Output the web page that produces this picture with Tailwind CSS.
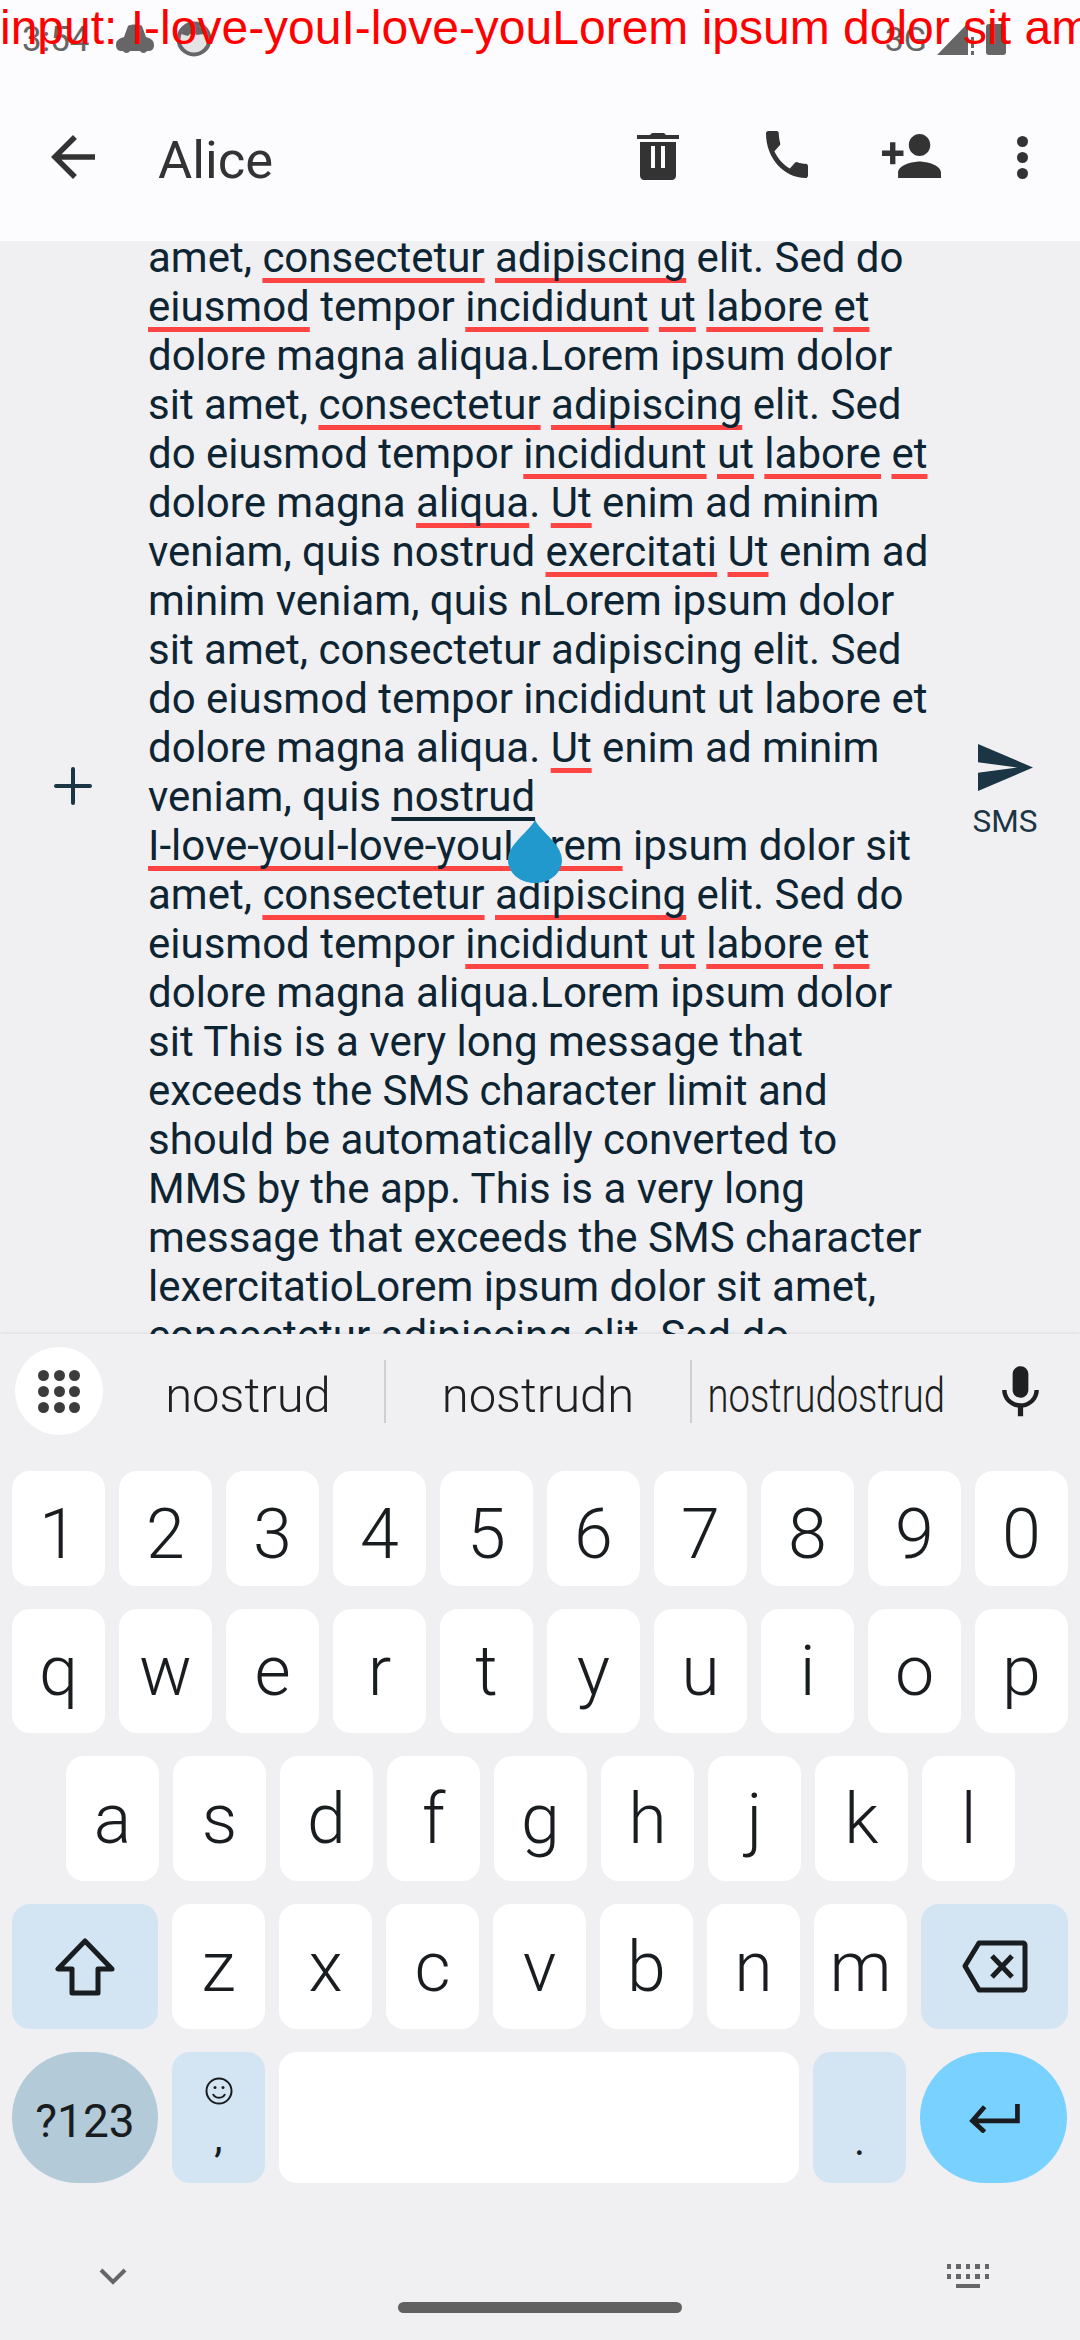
<!DOCTYPE html>
<html lang="en">
<head>
  <meta charset="UTF-8" />
  <title>Messaging</title>
  <script src="https://cdn.jsdelivr.net/npm/@tailwindcss/browser@4"></script>
</head>
<body class="bg-[#f0f0f3] [font-family:Roboto,sans-serif]">
  <div class="relative flex h-[2340px] w-[1080px] flex-col overflow-hidden">

    <!-- debug line drawn over the status bar -->
    <div class="absolute left-0 top-0 z-20 whitespace-nowrap text-[48px] leading-[55px] text-[#ff0000] [font-family:'Liberation_Sans',sans-serif]">input: I-love-youI-love-youLorem ipsum dolor sit am</div>

    <!-- status bar + toolbar -->
    <header class="h-[241px] shrink-0 bg-[#fcfcff]">
      <div class="flex h-[70px] items-center px-[22px] text-[#666666]">
        <span class="text-[35px] leading-none pt-[8px]">3:54</span>
        <svg class="ml-[26px] mt-[8px]" width="38" height="30" viewBox="0 0 38 30" fill="#666666"><path d="M12 2c2-2 12-2 14 0l4 11c4 1 8 3 8 8 0 5-3 6-6 6h-1a4 4 0 0 1-7 0H14a4 4 0 0 1-7 0H6c-3 0-6-1-6-6 0-5 4-7 8-8z"/></svg>
        <svg class="ml-[22px] mt-[8px]" width="36" height="36" viewBox="0 0 36 36"><circle cx="18" cy="18" r="15.5" fill="#e4e4e6" stroke="#666666" stroke-width="4"/><path d="M18 4a14 14 0 0 0-13 9l7 2c3-4 6-3 9-1 4-1 7-1 9 0A14 14 0 0 0 18 4z" fill="#666666"/></svg>
        <span class="ml-auto pt-[8px] text-[34px] leading-none">3G</span>
        <svg class="ml-[10px] mt-[8px]" width="40" height="32" viewBox="0 0 40 32" fill="#666666"><path d="M0 32 31 0v32z"/><path d="M34 14h3v11h-3zM34 28h3v4h-3z"/></svg>
        <span class="ml-[9px] mr-[52px] mt-[8px] h-[31px] w-[20px] rounded-[3px] bg-[#666666]"></span>
      </div>
      <div class="flex h-[171px] items-start">
        <svg class="ml-[51px] mt-[65px]" width="44" height="44" viewBox="4 4 16 16" fill="#333333"><path d="M20 11H7.83l5.59-5.59L12 4l-8 8 8 8 1.41-1.41L7.83 13H20v-2z"/></svg>
        <span class="ml-[63px] mt-[59px] w-[116px] text-[52.5px] leading-[62px] text-[#333333]">Alice</span>
        <svg class="ml-[363px] mt-[63px]" width="42" height="47" viewBox="0 0 42 47" fill="#333333"><path fill-rule="evenodd" d="M3 9h36v34c0 2-2 4-4 4H7c-2 0-4-2-4-4zM14 13v22h4V13zM24 13v22h4V13zM0 2h13l2-2h12l2 2h13v4H0z"/></svg>
        <svg class="ml-[87px] mt-[61px]" width="42" height="47" viewBox="3 3 18 18" preserveAspectRatio="none" fill="#333333"><path d="M6.62 10.79c1.44 2.83 3.76 5.14 6.59 6.59l2.2-2.2c.27-.27.67-.36 1.02-.24 1.12.37 2.33.57 3.57.57.55 0 1 .45 1 1V20c0 .55-.45 1-1 1-9.39 0-17-7.61-17-17 0-.55.45-1 1-1h3.5c.55 0 1 .45 1 1 0 1.25.2 2.45.57 3.57.11.35.03.74-.25 1.02l-2.2 2.2z"/></svg>
        <svg class="ml-[74px] mt-[64px]" width="59" height="44" viewBox="1 4 22 16" preserveAspectRatio="none" fill="#333333"><path d="M15 12c2.21 0 4-1.79 4-4s-1.79-4-4-4-4 1.79-4 4 1.79 4 4 4zm-9-2V7H4v3H1v2h3v3h2v-3h3v-2H6zm9 4c-2.67 0-8 1.34-8 4v2h16v-2c0-2.66-5.33-4-8-4z"/></svg>
        <div class="ml-[76px] mt-[66px] flex flex-col gap-[5px]">
          <span class="size-[11px] rounded-full bg-[#333333]"></span>
          <span class="size-[11px] rounded-full bg-[#333333]"></span>
          <span class="size-[11px] rounded-full bg-[#333333]"></span>
        </div>
      </div>
    </header>

    <!-- compose row -->
    <main class="relative flex flex-1 overflow-hidden">
      <div class="flex w-[148px] shrink-0 items-center justify-center">
        <svg class="mt-[-4px] mr-[2px]" width="38" height="38" viewBox="0 0 38 38"><path d="M19 2v34M2 19h34" stroke="#1b3545" stroke-width="4" stroke-linecap="round"/></svg>
      </div>
      <div class="mt-[-8px] whitespace-nowrap text-[42px] leading-[49px] text-[#0d2433] [&_u]:decoration-[#ff4444] [&_u]:decoration-[5px] [&_u]:underline-offset-[6px] [&_u]:[text-decoration-skip-ink:none]">
        amet, <u>consectetur</u> <u>adipiscing</u> elit. Sed do<br>
        <u>eiusmod</u> tempor <u>incididunt</u> <u>ut</u> <u>labore</u> <u>et</u><br>
        dolore magna aliqua.Lorem ipsum dolor<br>
        sit amet, <u>consectetur</u> <u>adipiscing</u> elit. Sed<br>
        do eiusmod tempor <u>incididunt</u> <u>ut</u> <u>labore</u> <u>et</u><br>
        dolore magna <u>aliqua</u>. <u>Ut</u> enim ad minim<br>
        veniam, quis nostrud <u>exercitati</u> <u>Ut</u> enim ad<br>
        minim veniam, quis nLorem ipsum dolor<br>
        sit amet, consectetur adipiscing elit. Sed<br>
        do eiusmod tempor incididunt ut labore et<br>
        dolore magna aliqua. <u>Ut</u> enim ad minim<br>
        veniam, quis <span class="underline decoration-[4px] underline-offset-[6px] [text-decoration-skip-ink:none]">nostrud</span><br>
        <u>I-love-youI-love-youLorem</u> ipsum dolor sit<br>
        amet, <u>consectetur</u> <u>adipiscing</u> elit. Sed do<br>
        eiusmod tempor <u>incididunt</u> <u>ut</u> <u>labore</u> <u>et</u><br>
        dolore magna aliqua.Lorem ipsum dolor<br>
        sit This is a very long message that<br>
        exceeds the SMS character limit and<br>
        should be automatically converted to<br>
        MMS by the app. This is a very long<br>
        message that exceeds the SMS character<br>
        lexercitatioLorem ipsum dolor sit amet,<br>
        consectetur adipiscing elit. Sed do
      </div>
      <!-- text selection handle -->
      <svg class="absolute left-[508px] top-[579px]" width="54" height="63" viewBox="0 0 54 63" fill="#2199cc"><path d="M27 0C33 12 54 24 54 40 54 53 42 63 27 63 12 63 0 53 0 40 0 24 21 12 27 0z"/></svg>
      <!-- send button -->
      <div class="absolute left-[960px] top-[503px] flex w-[90px] flex-col items-center text-[#1b3545]">
        <svg width="55" height="47" viewBox="2 3 21 18" preserveAspectRatio="none" fill="#1b3545"><path d="M2.01 21 23 12 2.01 3 2 10l15 2-15 2z"/></svg>
        <span class="mt-[13px] text-[31.5px] leading-[36px]">SMS</span>
      </div>
    </main>

    <!-- keyboard -->
    <section class="relative h-[1006px] shrink-0 bg-[#f0f0f3] shadow-[0_-1px_3px_rgba(0,0,0,0.08)]">
      <div class="flex h-[137px] items-start text-[49px] font-[350] leading-none text-[#1d1f21]">
        <div class="ml-[15px] mt-[13px] grid size-[88px] shrink-0 grid-cols-3 content-center justify-center gap-x-[5px] gap-y-[5px] rounded-full bg-white px-[23px]">
          <span class="size-[11px] rounded-full bg-[#3c3c3c]"></span><span class="size-[11px] rounded-full bg-[#3c3c3c]"></span><span class="size-[11px] rounded-full bg-[#3c3c3c]"></span>
          <span class="size-[11px] rounded-full bg-[#3c3c3c]"></span><span class="size-[11px] rounded-full bg-[#3c3c3c]"></span><span class="size-[11px] rounded-full bg-[#3c3c3c]"></span>
          <span class="size-[11px] rounded-full bg-[#3c3c3c]"></span><span class="size-[11px] rounded-full bg-[#3c3c3c]"></span><span class="size-[11px] rounded-full bg-[#3c3c3c]"></span>
        </div>
        <div class="mt-[26px] flex h-[63px] w-[283px] items-center justify-center border-r-[2px] border-[#cfcfd2] pl-[9px] pt-[8px]">nostrud</div>
        <div class="mt-[26px] flex h-[63px] w-[306px] items-center justify-center border-r-[2px] border-[#cfcfd2] pt-[8px]">nostrudn</div>
        <div class="mt-[26px] flex h-[63px] w-[268px] items-center justify-center pt-[8px]"><span class="inline-block scale-x-[0.78]">nostrudostrud</span></div>
        <svg class="ml-[29px] mt-[27px]" width="63" height="63" viewBox="0 0 24 24" fill="#1d1f21"><path d="M12 14c1.66 0 2.99-1.34 2.99-3L15 5c0-1.66-1.34-3-3-3S9 3.34 9 5v6c0 1.66 1.34 3 3 3zm5.3-3c0 3-2.54 5.1-5.3 5.1S6.7 14 6.7 11H5c0 3.41 2.72 6.23 6 6.72V21h2v-3.28c3.28-.48 6-3.3 6-6.72h-1.7z"/></svg>
      </div>

      <div class="flex flex-col gap-[23px] px-[12px] text-[70px] leading-none text-[#1a1d1f] [&_b]:flex [&_b]:w-[93px] [&_b]:items-center [&_b]:justify-center [&_b]:rounded-[18px] [&_b]:bg-white [&_b]:font-[350]">
        <div class="flex h-[115px] gap-[14px] [&_b]:pt-[10px]"><b>1</b><b>2</b><b>3</b><b>4</b><b>5</b><b>6</b><b>7</b><b>8</b><b>9</b><b>0</b></div>
        <div class="flex h-[124px] gap-[14px]"><b>q</b><b>w</b><b>e</b><b>r</b><b>t</b><b>y</b><b>u</b><b>i</b><b>o</b><b>p</b></div>
        <div class="flex h-[125px] gap-[14px] pl-[54px]"><b>a</b><b>s</b><b>d</b><b>f</b><b>g</b><b>h</b><b>j</b><b>k</b><b>l</b></div>
        <div class="flex h-[125px] gap-[14px]">
          <div class="flex w-[146px] items-center justify-center rounded-[18px] bg-[#d3e4f3]">
            <svg width="60" height="58" viewBox="0 0 60 58" fill="none" stroke="#1a1d1f" stroke-width="5" stroke-linejoin="round"><path d="M30 3 3 31h14v24h26V31h14z"/></svg>
          </div>
          <b>z</b><b>x</b><b>c</b><b>v</b><b>b</b><b>n</b><b>m</b>
          <div class="flex w-[147px] items-center justify-center rounded-[18px] bg-[#d3e4f3]">
            <svg width="66" height="53" viewBox="0 0 66 53" fill="none" stroke="#1a1d1f" stroke-width="5" stroke-linejoin="round"><path d="M17 3h44c1 0 2 1 2 2v43c0 1-1 2-2 2H17L3 26zM30 16l20 21M50 16 30 37"/></svg>
          </div>
        </div>
        <div class="flex h-[131px] gap-[14px]">
          <div class="flex w-[146px] items-center justify-center rounded-full bg-[#b3cad8] pt-[6px] text-[46px]">?123</div>
          <div class="flex w-[93px] flex-col items-center rounded-[18px] bg-[#d3e4f3]">
            <svg class="mt-[25px]" width="28" height="28" viewBox="0 0 28 28" fill="none" stroke="#1a1d1f" stroke-width="2"><circle cx="14" cy="14" r="12.5"/><path d="M8 17c2 5 10 5 12 0"/><circle cx="10" cy="10.5" r="1.5" fill="#1a1d1f" stroke="none"/><circle cx="18" cy="10.5" r="1.5" fill="#1a1d1f" stroke="none"/></svg>
            <span class="mt-[8px] text-[42px] leading-[50px]">,</span>
          </div>
          <div class="w-[520px] rounded-[18px] bg-white"></div>
          <div class="flex w-[93px] justify-center rounded-[18px] bg-[#d3e4f3] pt-[64px] text-[42px] leading-[50px]">.</div>
          <div class="flex w-[147px] items-center justify-center rounded-full bg-[#79d1ff]">
            <svg width="52" height="30" viewBox="0 0 54 32" fill="none" stroke="#1a1d1f" stroke-width="5"><path d="M52 1v18H5M17 4 4 19l13 12"/></svg>
          </div>
        </div>
      </div>

      <!-- nav row under the keyboard -->
      <div class="relative mt-[73px] flex h-[40px] items-center justify-between pl-[99px] pr-[91px]">
        <svg width="28" height="17" viewBox="0 0 28 17" fill="none" stroke="#666666" stroke-width="4"><path d="M2 2 14 14 26 2"/></svg>
        <div class="grid w-[42px] grid-cols-5 gap-[5px]">
          <span class="h-[5px] bg-[#666666]"></span><span class="h-[5px] bg-[#666666]"></span><span class="h-[5px] bg-[#666666]"></span><span class="h-[5px] bg-[#666666]"></span><span class="h-[5px] bg-[#666666]"></span>
          <span class="h-[5px] bg-[#666666]"></span><span class="h-[5px] bg-[#666666]"></span><span class="h-[5px] bg-[#666666]"></span><span class="h-[5px] bg-[#666666]"></span><span class="h-[5px] bg-[#666666]"></span>
          <span class="col-span-3 col-start-2 h-[4px] bg-[#666666]"></span>
        </div>
      </div>
      <div class="mx-auto mt-[6px] h-[11px] w-[284px] rounded-full bg-[#616161]"></div>
    </section>
  </div>
</body>
</html>
